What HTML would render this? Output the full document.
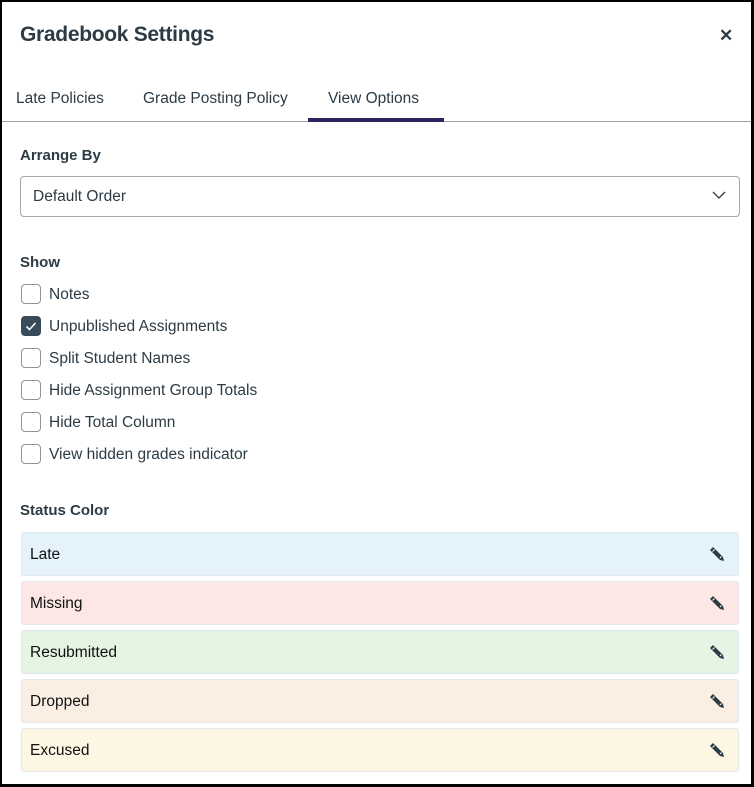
<!DOCTYPE html>
<html><head><style>
*{box-sizing:border-box;margin:0;padding:0}
body{width:754px;height:787px;background:#fff;font-family:"Liberation Sans",sans-serif;color:#2d3b45;position:relative;overflow:hidden}
.frame{position:absolute;left:0;top:0;width:754px;height:787px;border:2px solid #000;border-right-width:3px;border-bottom-width:3px}
h1{position:absolute;left:20px;top:23px;font-size:21px;font-weight:bold;color:#2d3b45;letter-spacing:-0.3px}
.x{position:absolute;left:719px;top:26px;font-size:17px;font-weight:bold}
.tab{position:absolute;top:90px;font-size:15.5px;color:#2d3b45}
.line{position:absolute;left:2px;right:3px;top:121px;height:1px;background:#9ba3ab}
.ul{position:absolute;left:308px;width:136px;top:118px;height:4px;background:#2d2560}
.lbl{position:absolute;left:20px;font-size:15px;font-weight:bold}
.sel{position:absolute;left:20px;top:176px;width:720px;height:41px;border:1px solid #a0a7ad;border-radius:4px;font-size:15.5px;padding:11px 12px}
.cb{position:absolute;left:21px;width:20px;height:20px;border:1px solid #8c959d;border-radius:4px;background:#fff}
.cb.on{background:#394b58;border-color:#394b58}
.ct{position:absolute;left:49px;font-size:15.5px}
.row{position:absolute;left:21px;width:718px;height:44px;border:1px solid #e5e8ea;border-radius:3px;font-size:15.5px;color:#111;padding:13px 0 0 8px}
.pen{position:absolute;right:12px;top:12px}
</style></head><body>
<div class="frame"></div>
<h1>Gradebook Settings</h1>
<div class="x">✕</div>
<div class="tab" style="left:16px">Late Policies</div>
<div class="tab" style="left:143px">Grade Posting Policy</div>
<div class="tab" style="left:328px">View Options</div>
<div class="line"></div><div class="ul"></div>
<div class="lbl" style="top:147px">Arrange By</div>
<div class="sel">Default Order
<svg style="position:absolute;right:13px;top:14px" width="14" height="9" viewBox="0 0 14 9"><path d="M1 1l6 6 6-6" fill="none" stroke="#2d3b45" stroke-width="1.3"/></svg></div>
<div class="lbl" style="top:254px">Show</div>
<div class="cb" style="top:284px"></div><div class="ct" style="top:286px">Notes</div>
<div class="cb on" style="top:316px"><svg width="18" height="18" viewBox="0 0 18 18"><path d="M4.5 9.5l3 3 6-6.5" fill="none" stroke="#fff" stroke-width="1.6"/></svg></div><div class="ct" style="top:318px">Unpublished Assignments</div>
<div class="cb" style="top:348px"></div><div class="ct" style="top:350px">Split Student Names</div>
<div class="cb" style="top:380px"></div><div class="ct" style="top:382px">Hide Assignment Group Totals</div>
<div class="cb" style="top:412px"></div><div class="ct" style="top:414px">Hide Total Column</div>
<div class="cb" style="top:444px"></div><div class="ct" style="top:446px">View hidden grades indicator</div>
<div class="lbl" style="top:502px">Status Color</div>
<div class="row" style="top:532px;background:#e4f2fc">Late<svg class="pen" width="18" height="18" viewBox="0 0 18 18"><path d="M2 5l3-3 10 10 1 4-4-1z" fill="#2d3b45"/><path d="M4.5 6.5l2-2M12 13l1.5-1.5" stroke="#fff" stroke-width="1"/></svg></div>
<div class="row" style="top:581px;background:#fce7e4">Missing<svg class="pen" width="18" height="18" viewBox="0 0 18 18"><path d="M2 5l3-3 10 10 1 4-4-1z" fill="#2d3b45"/><path d="M4.5 6.5l2-2M12 13l1.5-1.5" stroke="#fff" stroke-width="1"/></svg></div>
<div class="row" style="top:630px;background:#e5f5e3">Resubmitted<svg class="pen" width="18" height="18" viewBox="0 0 18 18"><path d="M2 5l3-3 10 10 1 4-4-1z" fill="#2d3b45"/><path d="M4.5 6.5l2-2M12 13l1.5-1.5" stroke="#fff" stroke-width="1"/></svg></div>
<div class="row" style="top:679px;background:#fbefe4">Dropped<svg class="pen" width="18" height="18" viewBox="0 0 18 18"><path d="M2 5l3-3 10 10 1 4-4-1z" fill="#2d3b45"/><path d="M4.5 6.5l2-2M12 13l1.5-1.5" stroke="#fff" stroke-width="1"/></svg></div>
<div class="row" style="top:728px;background:#fdf6e3">Excused<svg class="pen" width="18" height="18" viewBox="0 0 18 18"><path d="M2 5l3-3 10 10 1 4-4-1z" fill="#2d3b45"/><path d="M4.5 6.5l2-2M12 13l1.5-1.5" stroke="#fff" stroke-width="1"/></svg></div>
</body></html>
